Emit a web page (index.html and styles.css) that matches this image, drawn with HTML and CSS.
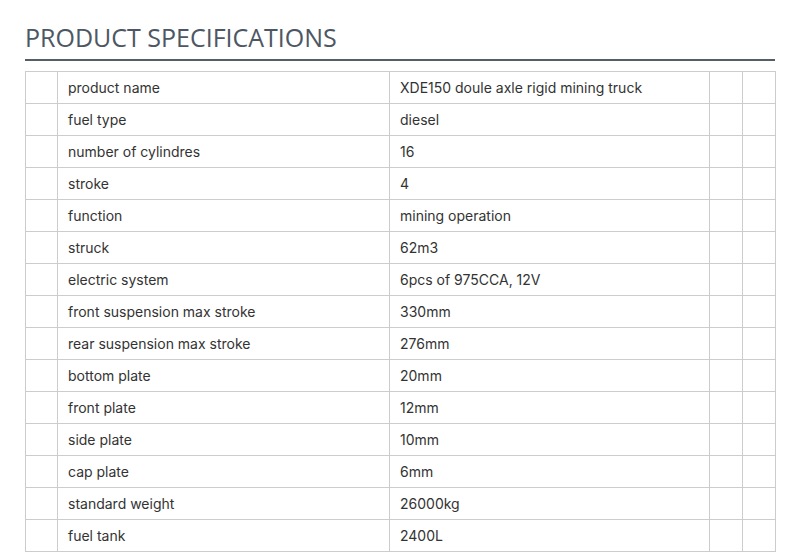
FILE: index.html
```html
<!DOCTYPE html>
<html>
<head>
<meta charset="utf-8">
<link rel="stylesheet" href="styles.css">
</head>
<body>
<div class="wrap">
  <h2 class="title">PRODUCT SPECIFICATIONS</h2>
  <table class="specs">
    <colgroup>
      <col class="c1"><col class="c2"><col class="c3"><col class="c4"><col class="c5">
    </colgroup>
    <tbody>
      <tr><td></td><td>product name</td><td>XDE150 doule axle rigid mining truck</td><td></td><td></td></tr>
      <tr><td></td><td>fuel type</td><td>diesel</td><td></td><td></td></tr>
      <tr><td></td><td>number of cylindres</td><td>16</td><td></td><td></td></tr>
      <tr><td></td><td>stroke</td><td>4</td><td></td><td></td></tr>
      <tr><td></td><td>function</td><td>mining operation</td><td></td><td></td></tr>
      <tr><td></td><td>struck</td><td>62m3</td><td></td><td></td></tr>
      <tr><td></td><td>electric system</td><td>6pcs of 975CCA, 12V</td><td></td><td></td></tr>
      <tr><td></td><td>front suspension max stroke</td><td>330mm</td><td></td><td></td></tr>
      <tr><td></td><td>rear suspension max stroke</td><td>276mm</td><td></td><td></td></tr>
      <tr><td></td><td>bottom plate</td><td>20mm</td><td></td><td></td></tr>
      <tr><td></td><td>front plate</td><td>12mm</td><td></td><td></td></tr>
      <tr><td></td><td>side plate</td><td>10mm</td><td></td><td></td></tr>
      <tr><td></td><td>cap plate</td><td>6mm</td><td></td><td></td></tr>
      <tr><td></td><td>standard weight</td><td>26000kg</td><td></td><td></td></tr>
      <tr><td></td><td>fuel tank</td><td>2400L</td><td></td><td></td></tr>
    </tbody>
  </table>
</div>
</body>
</html>
```
FILE: styles.css
```css
html, body {
  margin: 0;
  padding: 0;
  background: #ffffff;
}
.wrap {
  width: 750px;
  margin-left: 25px;
  padding-top: 20px;
}
.title {
  margin: 0;
  font-family: "Open Sans", sans-serif;
  font-weight: 400;
  font-size: 25px;
  line-height: 34px;
  color: #4d5764;
  border-bottom: 2px solid #555e66;
  padding-bottom: 5px;
}
.specs {
  margin-top: 10px;
  width: 750px;
  border-collapse: collapse;
  table-layout: fixed;
  font-family: "Inter", sans-serif;
  font-size: 14px;
  color: #333333;
}
.c1 { width: 32px; }
.c2 { width: 332px; }
.c3 { width: 320px; }
.c4 { width: 33px; }
.c5 { width: 33px; }
.specs td {
  border: 1px solid #cccccc;
  height: 32px;
  padding: 0 10px;
  box-sizing: border-box;
  white-space: nowrap;
}
.specs td:first-child,
.specs td:nth-child(4),
.specs td:nth-child(5) {
  padding: 0;
}
```
